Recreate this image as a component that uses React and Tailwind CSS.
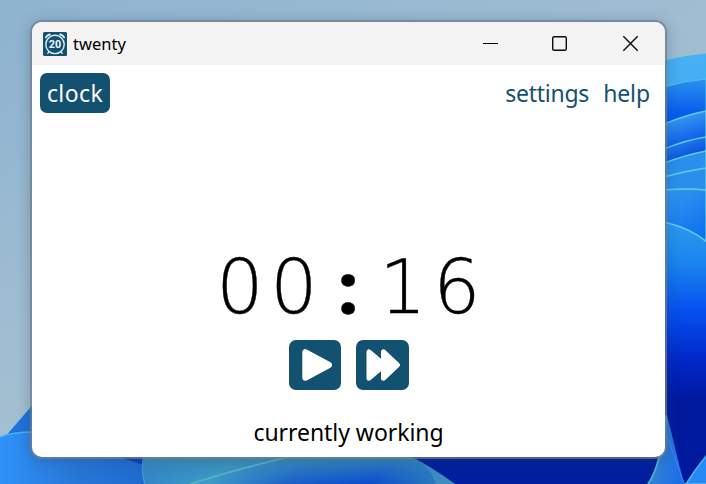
import React from "react";

function Wallpaper() {
  return (
    <svg className="absolute inset-0" width="706" height="484" viewBox="0 0 706 484">
      <defs>
        <linearGradient id="sky" x1="0" y1="0" x2="1" y2="0.7">
          <stop offset="0" stopColor="#8fb4d0" />
          <stop offset="0.5" stopColor="#9bbbd2" />
          <stop offset="1" stopColor="#a8bfce" />
        </linearGradient>
        <linearGradient id="haze" x1="0" y1="100" x2="0" y2="440" gradientUnits="userSpaceOnUse">
          <stop offset="0" stopColor="#a2bed2" stopOpacity="0" />
          <stop offset="1" stopColor="#a6c0d2" stopOpacity="0.9" />
        </linearGradient>
        <linearGradient id="petal" x1="0" y1="0" x2="0" y2="1">
          <stop offset="0" stopColor="#48b0f4" />
          <stop offset="1" stopColor="#1c8cee" />
        </linearGradient>
        <linearGradient id="deep" x1="0" y1="80" x2="0" y2="124" gradientUnits="userSpaceOnUse">
          <stop offset="0" stopColor="#2890ee" />
          <stop offset="0.8" stopColor="#0759ee" />
        </linearGradient>
        <linearGradient id="band" x1="670" y1="116" x2="680" y2="148" gradientUnits="userSpaceOnUse">
          <stop offset="0" stopColor="#3a9ef2" />
          <stop offset="1" stopColor="#0a58ea" />
        </linearGradient>
        <linearGradient id="band2" x1="670" y1="148" x2="675" y2="162" gradientUnits="userSpaceOnUse">
          <stop offset="0" stopColor="#1c76ea" />
          <stop offset="1" stopColor="#0752e0" />
        </linearGradient>
        <linearGradient id="lower" x1="670" y1="190" x2="700" y2="240" gradientUnits="userSpaceOnUse">
          <stop offset="0" stopColor="#2f98f0" />
          <stop offset="1" stopColor="#0e6ef2" />
        </linearGradient>
        <linearGradient id="fall" x1="0" y1="222" x2="0" y2="400" gradientUnits="userSpaceOnUse">
          <stop offset="0" stopColor="#2b9af0" />
          <stop offset="0.22" stopColor="#1b86ee" />
          <stop offset="0.5" stopColor="#0650f0" />
          <stop offset="0.78" stopColor="#0226c8" />
          <stop offset="1" stopColor="#001a9e" />
        </linearGradient>
        <linearGradient id="left" x1="0" y1="0" x2="1" y2="0">
          <stop offset="0" stopColor="#2f92fa" />
          <stop offset="0.5" stopColor="#2776d6" />
          <stop offset="0.9" stopColor="#1f6cd0" />
          <stop offset="1" stopColor="#0d40bc" />
        </linearGradient>
        <linearGradient id="mid" x1="0" y1="0" x2="1" y2="0.1">
          <stop offset="0" stopColor="#2f7cc8" />
          <stop offset="0.3" stopColor="#3e9cc6" />
          <stop offset="0.55" stopColor="#1b60c6" />
          <stop offset="0.8" stopColor="#0a4ccc" />
          <stop offset="1" stopColor="#2a78bc" />
        </linearGradient>
        <linearGradient id="midtop" x1="0" y1="457" x2="0" y2="484" gradientUnits="userSpaceOnUse">
          <stop offset="0" stopColor="#4291b8" stopOpacity="0.9" />
          <stop offset="1" stopColor="#2f86c8" stopOpacity="0" />
        </linearGradient>
        <linearGradient id="stem" x1="0" y1="0" x2="1" y2="0.3">
          <stop offset="0" stopColor="#3b8cc8" />
          <stop offset="1" stopColor="#1d6fe8" />
        </linearGradient>
      </defs>
      <rect width="706" height="484" fill="url(#sky)" />
      <rect y="100" width="34" height="340" fill="url(#haze)" />
      <path d="M664 61Q684 56 706 54V484H664Z" fill="url(#petal)" stroke="#38b8f0" />
      <path d="M664 87Q684 81 706 79V484H664Z" fill="url(#deep)" stroke="#4cc4e8" />
      <path d="M664 124Q686 115 706 111V484H664Z" fill="url(#band)" stroke="#62cce8" strokeWidth="1.3" />
      <path d="M664 149Q686 140 706 137V484H664Z" fill="url(#band2)" stroke="#62cce8" strokeWidth="1.3" />
      <path d="M664 163Q686 155 706 151V484H664Z" fill="#2890ec" stroke="#62cce8" strokeWidth="1.3" />
      <path d="M664 177Q686 171 706 168" fill="none" stroke="#62cce8" strokeWidth="1.3" />
      <path d="M664 190Q686 188 706 190V484H664Z" fill="url(#lower)" stroke="#62cce8" strokeWidth="1.3" />
      <path d="M664 222Q690 228 707 242V484H664Z" fill="url(#fall)" stroke="#62cce8" strokeWidth="1.5" />
      <path d="M0 442L32 405V470H0Z" fill="#1f72d8" />
      <path d="M7 434L32 405" stroke="#8fc4e4" />
      <path d="M0 437Q12 432 34 432L34 450H155V484H0Z" fill="url(#left)" />
      <path d="M0 437Q12 432 34 432" fill="none" stroke="#4eb2ec" strokeWidth="1.5" />
      <path d="M120 457L143 465V457Z" fill="#0b40b8" />
      <path d="M145 455Q140 470 145 485H460V455Z" fill="url(#mid)" />
      <path d="M145 455Q140 470 145 485H460V455Z" fill="url(#midtop)" />
      <path d="M144 455Q140 470 145 485" fill="none" stroke="#51a2d0" />
      <path d="M190 484Q240 468 293 456" fill="none" stroke="#4fb2c4" strokeWidth="2" />
      <path d="M410 456Q434 468 455 484H665V456Z" fill="#001f9f" />
      <path d="M410 456Q430 467 455 484H436Q430 466 410 456Z" fill="#3c8cc0" />
      <path d="M649 484Q661 466 667 415L684 484Z" fill="url(#stem)" />
      <path d="M648 484Q661 466 666 415" fill="none" stroke="#54adc8" strokeWidth="2" />
      <path d="M667 436L684 483" stroke="#4c82d8" />
      <path d="M686 484Q696 468 707 455V484Z" fill="#238af8" stroke="#58b2e8" strokeWidth="1.5" />
    </svg>
  );
}

function Logo() {
  return (
    <svg width="24" height="24" viewBox="0 0 24 24" className="shrink-0">
      <rect width="24" height="24" rx="1.5" fill="#135170" />
      <g fill="none" stroke="#e3f0f6" strokeLinecap="round">
        <circle cx="12" cy="12.4" r="9.2" strokeWidth="1.4" />
        <path d="M2.9 5.4Q4 3.1 6.8 2.5M17.2 2.5Q20 3.1 21.1 5.4" strokeWidth="1.8" />
        <path d="M6 19.8L4.8 21.4M18 19.8L19.2 21.4" strokeWidth="1.3" />
      </g>
      <text x="12" y="16.2" textAnchor="middle" textLength="12.4" lengthAdjust="spacingAndGlyphs" className="fill-[#eef7fb] font-['Roboto',sans-serif] text-[10.5px] font-bold">20</text>
    </svg>
  );
}

function TitleBar() {
  return (
    <header className="flex h-[43px] shrink-0 items-center bg-[#f3f3f3] pl-[11px] pr-[26px]">
      <Logo />
      <span className="ml-1.5 font-['Noto_Sans',sans-serif] text-[16.5px] leading-6 text-black">twenty</span>
      <svg className="ml-auto" width="158" height="18" viewBox="0 0 158 18" fill="none" stroke="#0b0b0b" strokeWidth="1.4">
        <path d="M2 8.5H17" strokeWidth="1" stroke="#000" />
        <rect x="71.7" y="1.7" width="13.6" height="13.6" rx="1.5" />
        <path d="M142.3 1.3L156.7 15.7M156.7 1.3L142.3 15.7" />
      </svg>
    </header>
  );
}

function Nav() {
  return (
    <nav className="flex h-14 shrink-0 items-center px-2 font-['Noto_Sans',sans-serif] text-[23px] text-[#135170]">
      <a className="flex h-10 w-[70px] items-center justify-center rounded-[7px] bg-[#135170] text-white">
        <span className="tracking-[0.4px]">clock</span>
      </a>
      <a className="ml-auto mr-[14px] tracking-[-0.25px]">settings</a>
      <a className="mr-[7px] tracking-[-0.1px]">help</a>
    </nav>
  );
}

function Digit({ children }) {
  return (
    <span className="flex w-[54.5px] justify-center">
      <span className="scale-x-[0.99]">{children}</span>
    </span>
  );
}

function Timer() {
  return (
    <div className="mt-[122px] flex h-[88px] items-center font-['DejaVu_Sans',sans-serif] text-[75px] font-extralight leading-[88px] text-black [-webkit-text-stroke:0.4px_#000]">
      <Digit>0</Digit>
      <Digit>0</Digit>
      <span className="flex w-[54px] justify-center font-['Open_Sans',sans-serif] text-[71px] font-bold">
        <span className="scale-x-110">:</span>
      </span>
      <Digit>1</Digit>
      <Digit>6</Digit>
    </div>
  );
}

function Controls() {
  return (
    <div className="mt-[9px] flex gap-[15px]">
      <button className="h-[50px] w-[52px] rounded-[7px] bg-[#135170]">
        <svg width="52" height="50" viewBox="0 0 52 50" fill="#fff" stroke="#fff" strokeWidth="6" strokeLinejoin="round">
          <path d="M16.3 12.2V37.8L40 25Z" />
        </svg>
      </button>
      <button className="h-[50px] w-[53px] rounded-[7px] bg-[#135170]">
        <svg width="53" height="50" viewBox="0 0 53 50" fill="#fff" stroke="#fff" strokeWidth="5" strokeLinejoin="round">
          <path d="M13 11.8V38.2L26 27V23ZM27.5 11.8V38.2L41.5 25Z" />
        </svg>
      </button>
    </div>
  );
}

export default function App() {
  return (
    <div className="relative h-[484px] w-[706px] overflow-hidden">
      <Wallpaper />
      <div className="absolute left-[30px] top-5 rounded-[12px] bg-[#6b7b8b]/75 p-0.5 shadow-[0_2px_14px_rgba(40,60,80,0.3)]">
        <main className="flex h-[435px] w-[633px] flex-col overflow-hidden rounded-[10px] bg-white">
          <TitleBar />
          <Nav />
          <section className="flex flex-col items-center">
            <Timer />
            <Controls />
            <p className="mt-[26px] font-['Noto_Sans',sans-serif] text-[23px] leading-8 tracking-[-0.05px] text-black">currently working</p>
          </section>
        </main>
      </div>
    </div>
  );
}
